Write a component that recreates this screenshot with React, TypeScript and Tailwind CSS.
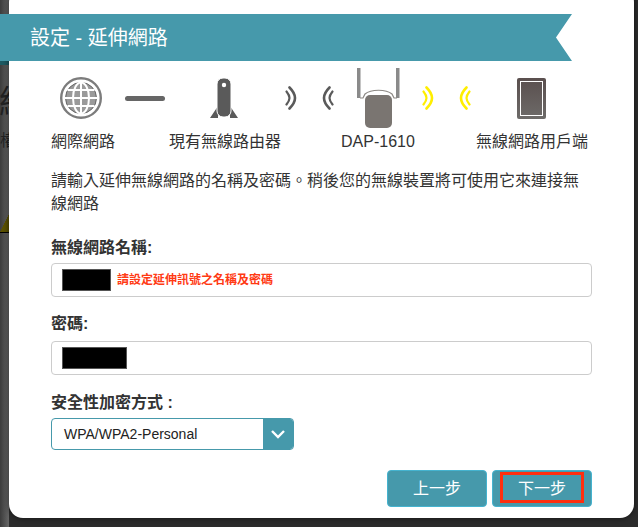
import React from 'react';

const cjk = "font-['Liberation_Sans','Noto_Sans_CJK_TC',sans-serif]";

const Wave = ({ color, flip = false }: { color: string; flip?: boolean }) => (
  <svg width="12" height="24" viewBox="0 0 12 24" fill="none" className={flip ? '-scale-x-100' : ''}>
    <path d="M4.5 1.5 C8.5 5.5 10 9 10 12 C10 15 8.5 18.5 4.5 22.5" stroke={color} strokeWidth="2.6" strokeLinecap="round" />
    <path d="M1.5 5.5 C3.5 8 4.5 10 4.5 12 C4.5 14 3.5 16 1.5 18.5" stroke={color} strokeWidth="2.2" strokeLinecap="round" />
  </svg>
);

const Globe = () => (
  <svg width="42" height="42" viewBox="0 0 42 42" fill="none">
    <circle cx="21" cy="21" r="19.8" stroke="#7c7c7c" strokeWidth="2.4" fill="#fff" />
    <circle cx="21" cy="21" r="15.5" fill="#9a9a9a" stroke="#666" strokeWidth="1" />
    <ellipse cx="21" cy="21" rx="8" ry="15.5" stroke="#fff" strokeWidth="2" />
    <path d="M21 5V37M5 21H37M7.5 13H34.5M7.5 29H34.5" stroke="#fff" strokeWidth="2" />
  </svg>
);

const Router = () => (
  <svg width="28" height="42" viewBox="0 0 28 42" fill="none">
    <path d="M0 41 L8 29 V41 Z M28 41 L20 29 V41 Z" fill="#5a5a5a" />
    <rect x="7" y="1" width="14" height="39" rx="6" fill="#5a5a5a" stroke="#fff" strokeWidth="1" />
    <circle cx="14" cy="8" r="2.2" fill="#fff" />
  </svg>
);

const Extender = () => (
  <svg width="43" height="60" viewBox="0 0 43 60" fill="none">
    <rect x="0" y="0" width="3.5" height="30" fill="#8a8a8a" />
    <rect x="39" y="0" width="3.5" height="30" fill="#8a8a8a" />
    <path d="M3 30 H6 L8 26 C14 21 29 21 35 26 L37 30 H40" stroke="#8c8884" strokeWidth="1.2" />
    <rect x="8" y="27" width="27" height="33" rx="5" fill="#7a7571" />
  </svg>
);

const Tablet = () => (
  <div className="flex h-[41px] w-[29px] rounded-[2px] bg-gradient-to-b from-[#5a4f4e] to-[#6d6b69] p-[3px]">
    <div className="flex-1 border border-white" />
  </div>
);

const App = () => {
  return (
    <div className="relative h-[527px] w-[638px] overflow-hidden bg-[#2c2c2c]">
      {/* dimmed page peeking out behind the dialog */}
      <div className="absolute left-0 top-0 h-full w-[9px] bg-gradient-to-r from-[#3c3c3c] to-[#686868]" />
      <div className="absolute left-0 top-[61px] h-[4px] w-[9px] bg-[#1d5a63]" />
      <div className={`absolute left-[-1px] top-[82px] text-[32px] leading-[40px] text-[#222] ${cjk}`}>絡</div>
      <div className={`absolute left-0 top-[131px] text-[16px] leading-[20px] text-[#222] ${cjk}`}>權</div>
      <div className="absolute left-0 top-[214px] h-[19px] w-[9px] border-b border-black bg-[linear-gradient(to_bottom_right,transparent_50%,#5c5200_50%)]" />

      <div className="absolute left-0 top-0 h-full w-full">
        <div className="ml-[9px] mt-[-12px] h-[530px] w-[625px] rounded-[14px] bg-white shadow-[0_0_6px_rgba(0,0,0,0.6)]">
          <div className="pt-[26px]">
            <div
              className={`ml-[-9px] flex h-[47px] w-[572px] items-center bg-[#4699ab] pl-[30px] text-[20px] leading-[26px] text-white [clip-path:polygon(0_0,100%_0,97.2%_50%,100%_100%,0_100%)] ${cjk}`}
            >
              設定 - 延伸網路
            </div>
          </div>

          <div className="mt-[7px] flex h-[60px] items-center pl-[51px]">
            <div className="ml-0"><Globe /></div>
            <div className="ml-[23px] h-[5px] w-[40px] rounded-full bg-[#666]" />
            <div className="ml-[45px]"><Router /></div>
            <div className="ml-[47px]"><Wave color="#5a5a5a" /></div>
            <div className="ml-[25px]"><Wave color="#5a5a5a" flip /></div>
            <div className="ml-[23px]"><Extender /></div>
            <div className="ml-[22px]"><Wave color="#ffee00" /></div>
            <div className="ml-[25px]"><Wave color="#ffee00" flip /></div>
            <div className="ml-[46px]"><Tablet /></div>
          </div>

          <div className={`mt-[3px] flex pl-[42px] text-[16px] leading-[22px] text-[#333] ${cjk}`}>
            <span className="w-[118px]">網際網路</span>
            <span className="w-[172px]">現有無線路由器</span>
            <span className="w-[135px]">DAP-1610</span>
            <span>無線網路用戶端</span>
          </div>

          <div className="px-[42px]">
            <p className={`mt-[16px] text-[16px] leading-[23px] text-[#333] ${cjk}`}>
              請輸入延伸無線網路的名稱及密碼。稍後您的無線裝置將可使用它來連接無線網路
            </p>

            <div className={`mt-[22px] text-[16px] font-bold leading-[22px] text-[#333] ${cjk}`}>無線網路名稱:</div>
            <div className="mt-[4px] flex h-[34px] w-[541px] items-center rounded-[4px] border border-[#ccc] pl-[10px]">
              <div className="h-[22px] w-[49px] border border-[#555] bg-black" />
              <span className={`ml-[6px] text-[12px] font-bold text-[#ff3a14] ${cjk}`}>請設定延伸訊號之名稱及密碼</span>
            </div>

            <div className={`mt-[16px] text-[16px] font-bold leading-[22px] text-[#333] ${cjk}`}>密碼:</div>
            <div className="mt-[6px] flex h-[34px] w-[541px] items-center rounded-[4px] border border-[#ccc] pl-[10px]">
              <div className="h-[22px] w-[65px] border border-[#555] bg-black" />
            </div>

            <div className={`mt-[17px] text-[16px] font-bold leading-[22px] text-[#333] ${cjk}`}>安全性加密方式 :</div>
            <div className="mt-[4px] flex h-[32px] w-[243px] overflow-hidden rounded-[4px] border border-[#4699ab]">
              <div className="flex flex-1 items-center pl-[12px] font-['Liberation_Sans',sans-serif] text-[14px] text-[#222]">
                WPA/WPA2-Personal
              </div>
              <div className="flex w-[30px] items-center justify-center bg-[#4699ab]">
                <svg width="16" height="10" viewBox="0 0 16 10" fill="none">
                  <path d="M2 2L8 8L14 2" stroke="#fff" strokeWidth="2.4" />
                </svg>
              </div>
            </div>

            <div className={`mt-[20px] flex w-[541px] justify-end gap-[5px] text-[16px] text-white ${cjk}`}>
              <button className="flex h-[37px] w-[100px] items-center justify-center rounded-[4px] border border-[#45b3cf] bg-[#4699ab]">
                上一步
              </button>
              <button className="relative flex h-[37px] w-[100px] items-center justify-center rounded-[4px] border border-[#45b3cf] bg-[#4699ab]">
                下一步
                <span className="absolute left-[7px] top-[1px] h-[31px] w-[84px] border-[3px] border-[#ff2f0f]" />
              </button>
            </div>
          </div>
        </div>
      </div>
    </div>
  );
};

export default App;
